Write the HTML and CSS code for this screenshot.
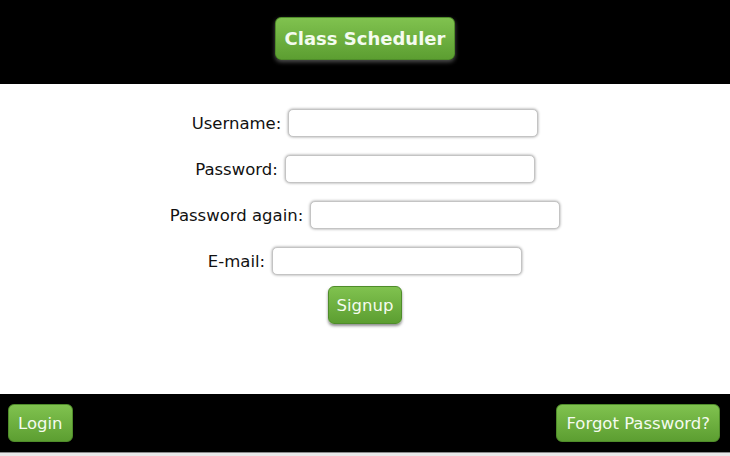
FILE: index.html
```html
<!DOCTYPE html>
<html>
<head>
<meta charset="utf-8">
<link rel="stylesheet" href="styles.css">
</head>
<body>
<header class="top">
  <button class="btn title">Class Scheduler</button>
</header>
<main class="content">
  <form class="form">
    <div class="row"><label>Username:</label><input class="field" type="text"></div>
    <div class="row"><label>Password:</label><input class="field" type="password"></div>
    <div class="row"><label>Password again:</label><input class="field" type="password"></div>
    <div class="row"><label>E-mail:</label><input class="field" type="text"></div>
    <div class="row"><button type="button" class="btn signup">Signup</button></div>
  </form>
</main>
<footer class="bottom">
  <button class="btn small">Login</button>
  <button class="btn small">Forgot Password?</button>
</footer>
<div class="edge"></div>
</body>
</html>
```
FILE: styles.css
```css
html, body { margin: 0; padding: 0; background: #fff; }
body { font-family: "DejaVu Sans", Verdana, sans-serif; color: #111; }
.top { height: 84px; background: #000; display: flex; justify-content: center; align-items: flex-start; }
.btn {
  font-family: "DejaVu Sans", Verdana, sans-serif;
  background: linear-gradient(#80c24f, #5c9e31);
  border: 1px solid #4f8c2a;
  border-radius: 6px;
  color: #f4fbef;
  box-shadow: 0 2px 3px rgba(0,0,0,0.45);
  cursor: pointer;
}
.title { margin-top: 17px; height: 43px; width: 180px; font-weight: bold; font-size: 18px; padding: 0; box-shadow: 0 2px 4px rgba(90,90,90,0.9); }
.content { height: 310px; box-sizing: border-box; padding-top: 25px; }
.form { display: flex; flex-direction: column; align-items: center; gap: 18px; }
.row { display: flex; align-items: center; justify-content: center; gap: 7px; font-size: 16.5px; }
.row label { white-space: nowrap; }
.field {
  width: 250px; height: 28px; box-sizing: border-box;
  border: 1px solid #c4c4c4; border-radius: 5px;
  box-shadow: 0 0 3px rgba(0,0,0,0.4);
  background: #fff;
}
.signup { margin-top: -7px; height: 38px; width: 74px; font-size: 16.5px; padding: 0; }
.bottom { height: 58px; background: #000; display: flex; justify-content: space-between; align-items: flex-start; padding: 10px 10px 0 8px; box-sizing: border-box; }
.small { height: 38px; font-size: 16.5px; padding: 0 9px; }
.edge { height: 4px; background: #e8e8e8; border-top: 1px solid #8a8a8a; box-sizing: border-box; }
```
